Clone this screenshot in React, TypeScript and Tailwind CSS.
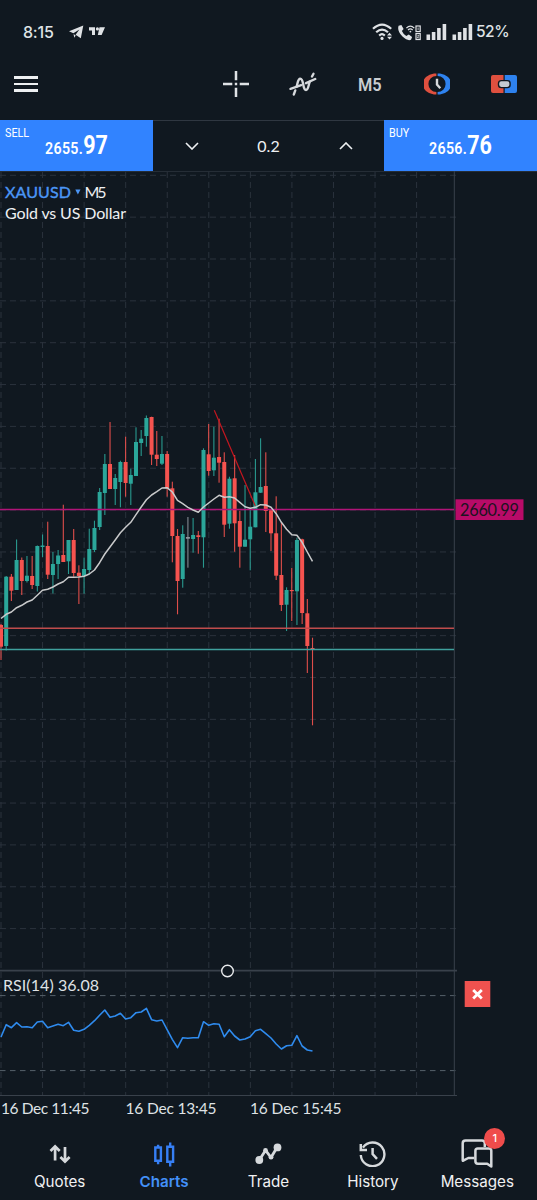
import type { ReactNode } from "react";

type Candle = [open: number, close: number, high: number, low: number, tone: "u" | "d" | "n"];

const STEP = 5.192;
const TONES = { u: "#2ba69a", d: "#f5534f", n: "#8f959d" };

// body top, body bottom, wick top, wick bottom, direction
const candles: Candle[] = [
  [625, 646.7, 624, 660, "d"], [576.7, 646, 576, 650.5, "u"], [576.7, 590.7, 574, 601, "d"],
  [560, 590, 539.5, 590, "u"], [560, 581, 557.5, 595, "d"], [575.7, 581, 556, 582.5, "u"],
  [576, 585, 556, 589, "d"], [546, 586, 545.5, 591.5, "u"], [545.5, 547, 534.5, 557, "u"],
  [546, 574.7, 521.7, 579, "d"], [564, 575, 552, 593.5, "u"], [555.5, 564, 550, 579, "u"],
  [555, 562, 504.7, 562, "d"], [540, 561.3, 540, 574, "u"], [540, 573, 529, 576.7, "d"],
  [572.7, 576, 565.3, 604, "d"], [569, 576, 557.7, 593.7, "u"], [549, 570, 528.7, 574, "u"],
  [528, 550, 520.7, 552, "u"], [492, 527, 488, 530, "u"], [464, 493, 454, 515, "u"],
  [464, 489, 422, 489, "d"], [478, 489, 474, 505, "u"], [462, 482, 460.7, 507.3, "u"],
  [462, 483, 436.7, 496.7, "d"], [475, 483.7, 468.7, 505, "u"], [442, 476, 427.3, 476, "u"],
  [438.7, 443, 430, 456, "u"], [418, 436, 415.5, 446.7, "u"], [417, 454.7, 416.7, 465, "d"],
  [454.7, 459, 431, 466, "d"], [454, 463.7, 436, 465, "u"], [454, 488.3, 451, 496.7, "d"],
  [488.3, 536, 481.7, 562.3, "d"], [536, 581, 529, 614.3, "d"], [534, 579, 525.3, 587.7, "u"],
  [537, 538.7, 517, 567.7, "n"], [535, 539, 518, 552.7, "u"], [535.3, 537, 531, 553.7, "d"],
  [450, 537.3, 448.3, 567.7, "u"], [454.3, 471, 424, 475.7, "d"], [457.7, 470.3, 426.7, 476, "u"],
  [457, 462.7, 418.7, 482.7, "d"], [462, 524.7, 452.3, 537, "d"], [478.7, 523.7, 476.7, 528.7, "u"],
  [478.3, 523.3, 455, 551.7, "d"], [521, 546.7, 510.7, 567.7, "d"], [539.7, 546.7, 485, 546.7, "u"],
  [526.7, 539.3, 508, 570.3, "u"], [492.3, 527.3, 459, 527.3, "u"], [487, 492.7, 438.3, 493, "u"],
  [486, 511, 452.3, 532, "d"], [510.3, 533.3, 510, 551, "d"], [533.3, 575.7, 496.3, 580, "d"],
  [575, 605, 522, 611, "d"], [590, 604.7, 587.3, 631, "u"], [590, 591, 568, 621, "d"],
  [540, 591.3, 537.7, 625, "u"], [539.3, 613, 538.7, 624, "d"], [613.3, 646, 599, 673, "d"],
  [648, 650, 637.7, 725.3, "d"],
];

const average = [
  618.5, 614.3, 612, 607.7, 605.3, 602, 600, 595.3, 590.3, 589.3, 587, 584, 581.7, 577.3, 577.3, 577,
  576.3, 574, 570, 562.7, 554, 547, 540, 532.7, 527.3, 522.3, 514.7, 507, 499.7, 495, 491.7, 488,
  487.7, 492, 500.3, 503.7, 507.3, 510, 512.3, 507, 503, 499, 495.3, 497.3, 496.7, 498, 502.3, 506.7,
  508.3, 507.3, 504.7, 505, 507.3, 513.7, 522.3, 529.3, 534.7, 535.3, 542.3, 552, 561.3,
];

const rsi = [
  246, 209, 218, 203, 216, 215, 218, 201, 199, 218, 213, 208, 212, 202, 226, 229, 223, 211, 197, 181,
  165, 187, 183, 175, 192, 188, 173, 171, 160, 194, 198, 195, 224, 253, 278, 248, 250, 248, 248, 200,
  211, 206, 208, 245, 224, 243, 255, 252, 245, 227, 223, 236, 249, 267, 282, 272, 271, 242, 273, 285, 288,
].map((v) => 955 + v / 3);

const px = (i: number) => 1 + i * STEP;
const points = (ys: number[]) => ys.map((y, i) => `${px(i).toFixed(1)},${y.toFixed(1)}`).join(" ");

const columns = Array.from({ length: 11 }, (_, i) => 1 + i * 41.56);
const rows = Array.from({ length: 19 }, (_, i) => 175.3 + i * 41.85);

function Chart() {
  return (
    <svg className="block h-[947px] w-[537px] font-['Lato',sans-serif]" viewBox="0 171 537 947">
      <g stroke="#2a323c" strokeWidth="1" strokeDasharray="6 4">
        {columns.map((x) => <line key={x} x1={x} x2={x} y1="172" y2="1095" />)}
        {rows.map((y) => <line key={y} x1="0" x2="457" y1={y} y2={y} />)}
      </g>
      <g stroke="#566069" strokeWidth="1" strokeDasharray="5.5 4.5">
        <line x1="0" x2="457" y1="995.6" y2="995.6" />
        <line x1="0" x2="457" y1="1070.6" y2="1070.6" />
      </g>
      <path d="M0 171.2H537" stroke="#2f3741" />
      <path d="M454.3 171V1095.5M0 1095.5H457" stroke="#39414b" fill="none" />
      <path d="M0 970.6H457" stroke="#39414b" strokeWidth="1.6" />

      {candles.map(([top, bottom, high, low, tone], i) => (
        <g key={i} fill={TONES[tone]}>
          <rect x={px(i) - 0.55} y={high} width="1.1" height={low - high} opacity="0.9" />
          <rect x={px(i) - 2} y={top} width="4" height={Math.max(bottom - top, 1.2)} />
        </g>
      ))}

      <path d="M214.3 410.3L255.3 506" stroke="#c4161f" strokeWidth="1.2" />
      <path d="M0 509.5H454" stroke="#b01478" strokeWidth="1.4" />
      <path d="M0 628.2H454" stroke="#c04c4c" strokeWidth="1.4" />
      <path d="M0 649.5H454" stroke="#3fa09d" strokeWidth="1.3" />
      <polyline points={points(average)} fill="none" stroke="#c9cacb" strokeWidth="1.5" strokeLinejoin="round" />
      <polyline points={points(rsi)} fill="none" stroke="#2f8bee" strokeWidth="1.6" strokeLinejoin="round" />

      <circle cx="227.5" cy="971" r="5.8" fill="#101820" stroke="#e9ebed" strokeWidth="1.4" />

      <text x="5" y="197.6" fontSize="16" fill="#4b96f5" textLength="66" stroke="#4b96f5" strokeWidth="0.4">XAUUSD</text>
      <path d="M75.3 189.5H80.5L77.9 194.5Z" fill="#4b96f5" />
      <text x="84.5" y="197.6" fontSize="16" fill="#eef0f2" textLength="22">M5</text>
      <text x="5" y="218.8" fontSize="16" fill="#eef0f2" textLength="121">Gold vs US Dollar</text>

      <rect x="455.5" y="499.3" width="68" height="20.7" fill="#b80b68" />
      <text x="460" y="515.5" fontSize="16.3" fill="#1b1320" textLength="59">2660.99</text>

      <text x="3" y="991" fontSize="16" fill="#dfe2e5" textLength="96">RSI(14) 36.08</text>
      <rect x="464.7" y="981" width="25.6" height="26" fill="#ef524f" />
      <path d="M473.2 989.9L481.8 998.5M481.8 989.9L473.2 998.5" stroke="#fff" strokeWidth="2.8" />

      <g fontSize="15.5" fill="#dfe2e5">
        <text x="1" y="1113.7" textLength="88.5">16 Dec 11:45</text>
        <text x="125.5" y="1113.7" textLength="91">16 Dec 13:45</text>
        <text x="250" y="1113.7" textLength="91.5">16 Dec 15:45</text>
      </g>
    </svg>
  );
}

function Signal() {
  return (
    <svg className="h-[17px] w-[21px]" viewBox="0 0 21 17" fill="#dfe2e5">
      <rect x="0.5" y="10.5" width="3.6" height="5.5" />
      <rect x="5.8" y="8" width="3.6" height="8" />
      <rect x="11.1" y="4" width="3.6" height="12" />
      <rect x="16.6" y="0" width="3.6" height="16" />
    </svg>
  );
}

function StatusBar() {
  return (
    <header className="flex h-[58px] items-center pt-[6px] pl-[23px] pr-[30px] text-[#dfe2e5]">
      <span className="w-[46px] text-[16px] font-medium tracking-[-0.2px]">8:15</span>
      <svg className="h-[14px] w-[37px]" viewBox="0 0 37 14" fill="#dfe2e5">
        <path d="M0 6.2L14.3 0.6L11.8 13.2L6.6 9.8L10.4 4.5L4.4 8.3Z" />
        <path d="M4.6 9L6.7 10.4L5.2 12.8Z" />
        <path d="M20 2.3H26V10H23V5.5H20ZM30.5 2.3H36L32.6 10H28.8Z" />
        <circle cx="28.4" cy="3.9" r="1.6" />
      </svg>
      <div className="ml-auto flex items-center">
        <svg className="mr-[4px] h-[18px] w-[22px]" viewBox="0 0 22 18" fill="none" stroke="#dfe2e5">
          <path d="M1 5.8Q10 -2.6 19.2 5.8" strokeWidth="2.2" />
          <path d="M4.2 9.3Q10 3.8 16 9.3" strokeWidth="2.2" />
          <path d="M7.2 12.6Q10 9.8 12.8 12.6" strokeWidth="2.2" />
          <circle cx="10" cy="15.4" r="1.6" fill="#dfe2e5" stroke="none" />
          <path d="M15 12.4L17.5 9.7L20 12.4ZM15 13.8L17.5 16.6L20 13.8Z" fill="#dfe2e5" stroke="none" />
        </svg>
        <svg className="mr-[5px] h-[17px] w-[23px]" viewBox="0 0 23 17" fill="#dfe2e5">
          <path d="M0.6 1.7L3.4 1L5.6 5L3.9 7.1Q5.3 10.4 8.3 12L10.8 10.4L14.1 13L13 15.7Q9.7 17.4 4.5 12.6Q-1.2 6.7 0.6 1.7Z" />
          <g fill="none" stroke="#dfe2e5" strokeWidth="1.2">
            <path d="M8.4 4.2Q12.3 0 16.3 4.2M10 6Q12.3 3.8 14.7 6" />
            <rect x="18" y="2" width="4.2" height="5.5" />
            <rect x="18" y="9.5" width="4.2" height="6" />
            <path d="M20.1 3.5V6M19.3 11.3H20.9L19.3 13.8H21" strokeWidth="0.8" />
          </g>
          <circle cx="12.4" cy="7.6" r="0.9" />
        </svg>
        <Signal />
        <div className="w-[5px]" />
        <Signal />
        <span className="ml-[3px] w-[31px] whitespace-nowrap text-[15.5px] font-medium tracking-[-0.5px]">52%</span>
      </div>
    </header>
  );
}

function Toolbar() {
  return (
    <div className="flex h-[62px] items-center justify-between pb-[10px] pl-[14px]">
      <button aria-label="Menu" className="flex h-4 w-6 flex-col justify-between">
        <span className="h-[2.7px] bg-[#eef0f2]" />
        <span className="h-[2.7px] bg-[#eef0f2]" />
        <span className="h-[2.7px] bg-[#eef0f2]" />
      </button>
      <div className="grid w-[334px] grid-cols-5 place-items-center">
        <svg className="h-[26px] w-[26px]" viewBox="0 0 26 26" stroke="#dfe2e5" strokeWidth="2.5">
          <path d="M13 0V9.3M13 16.7V26M0 13H9.3M16.7 13H26M11.8 13H14.2" />
        </svg>
        <svg className="h-[26px] w-[28px]" viewBox="0 0 28 26" fill="none" stroke="#d6d9dc" strokeWidth="2.4" strokeLinecap="round">
          <path d="M4.8 23.5L6.3 19.4M7.6 15.7C8.8 11.8 8.8 7.8 11.3 7.8C15.2 7.8 13.3 19 17 19C19.3 19 19.4 14.3 20.7 10.8M23 5.5L24.5 2.7" />
          <path d="M1.5 17.8L12.2 14.2M17 12.2L26.2 8" />
        </svg>
        <span className="mt-px scale-x-[0.86] text-[19px] font-semibold leading-[24px] text-[#c9cdd1] font-['Roboto',sans-serif]">M5</span>
        <svg className="h-[22px] w-[26px]" viewBox="0 0 26 22" fill="none">
          <path d="M12.4 0.5H10A13 10.6 0 0 0 10 21.5H12.4V19A8 8 0 0 1 12.4 3Z" fill="#df503f" />
          <path d="M13.6 0.5H16A13 10.6 0 0 1 16 21.5H13.6V19A8 8 0 0 0 13.6 3Z" fill="#2e82ef" />
          <path d="M13 5.8V11.6L16.3 15.2" stroke="#d6d9dc" strokeWidth="2.4" />
        </svg>
        <svg className="h-[18px] w-[26px]" viewBox="0 0 26 18">
          <path d="M2 0H12.5V18H2Q0 18 0 16V2Q0 0 2 0Z" fill="#df503f" />
          <path d="M13.7 0H24Q26 0 26 2V16Q26 18 24 18H13.7Z" fill="#2e82ef" />
          <rect x="7.5" y="5.6" width="11.6" height="7" rx="2.8" fill="#c5cbd1" stroke="#101820" strokeWidth="1.4" />
        </svg>
      </div>
    </div>
  );
}

function Quote({ side, whole, cents, className }: { side: string; whole: string; cents: string; className: string }) {
  return (
    <button className={`${className} flex h-[51px] flex-col items-start bg-[#3183ff] pl-[5px] pt-[4px] text-white font-['Roboto',sans-serif]`}>
      <span className="h-[8px] origin-left scale-x-[0.8] text-[13.5px] leading-[16px]">{side}</span>
      <span className="ml-[40px] flex origin-left scale-x-[0.86] items-baseline whitespace-nowrap leading-[28px]">
        <span className="text-[16.5px] font-semibold tracking-[0.4px]">{whole}</span>
        <span className="text-[25px] font-bold">{cents}</span>
      </span>
    </button>
  );
}

function TradePanel() {
  return (
    <div className="flex h-[51px]">
      <Quote side="SELL" whole="2655." cents="97" className="w-[153px]" />
      <div className="grid flex-1 grid-cols-3 place-items-center border-t border-[#2f3741] text-[#eef0f2]">
        <svg className="h-[8px] w-[14px]" viewBox="0 0 14 8" fill="none" stroke="currentColor" strokeWidth="1.6"><path d="M1 1L7 7L13 1" /></svg>
        <span className="text-[16px] font-['Lato',sans-serif]">0.2</span>
        <svg className="h-[8px] w-[14px]" viewBox="0 0 14 8" fill="none" stroke="currentColor" strokeWidth="1.6"><path d="M1 7L7 1L13 7" /></svg>
      </div>
      <Quote side="BUY" whole="2656." cents="76" className="w-[153px]" />
    </div>
  );
}

function Tab({ label, active, children }: { label: string; active?: boolean; children: ReactNode }) {
  return (
    <button className={`flex flex-col items-center pt-[19px] ${active ? "font-semibold text-[#4390f8]" : "text-[#f0f1f3]"}`}>
      <span className="relative flex h-[34px] items-center">{children}</span>
      <span className="mt-px whitespace-nowrap text-[15.2px] leading-[20px]">{label}</span>
    </button>
  );
}

function BottomNav() {
  return (
    <nav className="grid h-[82px] grid-cols-5 px-[7.5px]">
      <Tab label="Quotes">
        <svg className="h-[20px] w-[22px]" viewBox="0 0 22 20" fill="none" stroke="#d6d9dc" strokeWidth="2.7">
          <path d="M6.1 16.5V2.5M1.5 7L6.1 2.4L10.7 7M16 3V17.5M11.4 13L16 17.6L20.6 13" />
        </svg>
      </Tab>
      <Tab label="Charts" active>
        <svg className="h-[25px] w-[22px]" viewBox="0 0 22 25" fill="none" stroke="#367ff5" strokeWidth="2.4">
          <path d="M2.3 5.5H7.9V18.8H2.3ZM5.1 5.5V2.7M5.1 18.8V22.3" />
          <path d="M14.3 4.8H20.1V19.8H14.3ZM17.2 4.8V0.5M17.2 19.8V24.5" />
        </svg>
      </Tab>
      <Tab label="Trade">
        <svg className="h-[22px] w-[27px]" viewBox="0 0 27 22" fill="none" stroke="#d6d9dc" strokeWidth="2.8">
          <path d="M4.3 17L10.6 7.3L16 14.5L22 4.5" strokeLinejoin="round" />
          <circle cx="4.3" cy="17" r="3.9" fill="#d6d9dc" stroke="none" />
          <circle cx="10.5" cy="7.5" r="2.4" fill="#d6d9dc" stroke="none" />
          <circle cx="16" cy="14.2" r="2.4" fill="#d6d9dc" stroke="none" />
          <circle cx="22.5" cy="4.4" r="3.9" fill="#d6d9dc" stroke="none" />
        </svg>
      </Tab>
      <Tab label="History">
        <svg className="h-[26px] w-[27px]" viewBox="0 0 27 26" fill="none" stroke="#d6d9dc" strokeWidth="2.4">
          <path d="M1.8 14A11.8 11.8 0 1 0 3.9 6.6" />
          <path d="M1.8 3V9H8" strokeWidth="2.5" />
          <path d="M13.6 7V13L18 17.8" strokeWidth="2.5" />
        </svg>
      </Tab>
      <Tab label="Messages">
        <svg className="mt-[-2px] h-[30px] w-[32px]" viewBox="0 0 32 30" fill="none" stroke="#d6d9dc" strokeWidth="2.5" strokeLinejoin="round">
          <path d="M13.3 20H7.3L2.2 22.7Q1.7 23 1.7 22V5.2Q1.7 2.4 4.5 2.4H21Q23.8 2.4 23.8 5.2V9" />
          <path d="M16.8 10.4H28Q30.3 10.4 30.3 12.7V28.6L26.2 25.7H16.8Q14.4 25.7 14.4 23.3V12.7Q14.4 10.4 16.8 10.4Z" />
        </svg>
        <span className="absolute -right-[12px] -top-[9px] flex h-[21px] w-[21px] items-center justify-center rounded-full bg-[#ef4c4b] text-[11px] font-medium text-white">1</span>
      </Tab>
    </nav>
  );
}

export default function App() {
  return (
    <main className="flex h-[1200px] w-[537px] flex-col overflow-hidden bg-[#101820] font-['Inter',sans-serif]">
      <StatusBar />
      <Toolbar />
      <TradePanel />
      <Chart />
      <BottomNav />
    </main>
  );
}
